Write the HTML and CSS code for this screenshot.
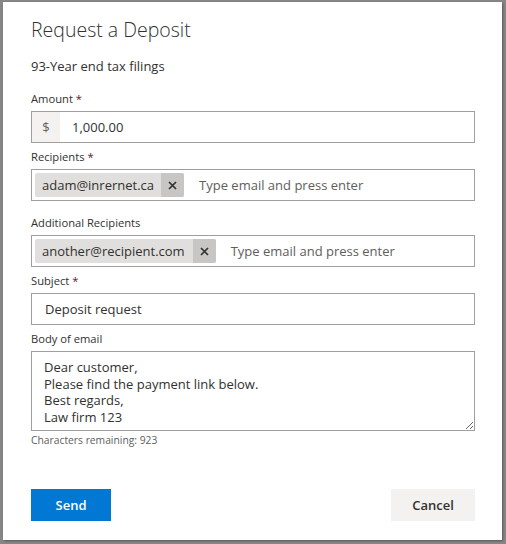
FILE: index.html
```html
<!DOCTYPE html>
<html>
<head>
<meta charset="utf-8">
<link rel="stylesheet" href="styles.css">
</head>
<body>
<div class="backdrop">
  <div class="dialog">
    <h1 class="title">Request a Deposit</h1>
    <div class="subtitle">93-Year end tax filings</div>

    <div class="field first">
      <div class="label">Amount <span class="req">*</span></div>
      <div class="box amount">
        <div class="prefix">$</div>
        <div class="value">1,000.00</div>
      </div>
    </div>

    <div class="field recipients">
      <div class="label">Recipients <span class="req">*</span></div>
      <div class="box tags">
        <div class="chip"><span class="chip-text">adam@inrernet.ca</span><span class="chip-x"><svg width="9" height="9" viewBox="0 0 9 9"><path d="M1 1L8 8M8 1L1 8" stroke="#323130" stroke-width="1.7" fill="none"/></svg></span></div>
        <div class="placeholder">Type email and press enter</div>
      </div>
    </div>

    <div class="field">
      <div class="label">Additional Recipients</div>
      <div class="box tags">
        <div class="chip"><span class="chip-text wide">another@recipient.com</span><span class="chip-x"><svg width="9" height="9" viewBox="0 0 9 9"><path d="M1 1L8 8M8 1L1 8" stroke="#323130" stroke-width="1.7" fill="none"/></svg></span></div>
        <div class="placeholder">Type email and press enter</div>
      </div>
    </div>

    <div class="field">
      <div class="label">Subject <span class="req">*</span></div>
      <div class="box text">Deposit request</div>
    </div>

    <div class="field">
      <div class="label">Body of email</div>
      <textarea class="body-text">Dear customer,
Please find the payment link below.
Best regards,
Law firm 123</textarea>
      <div class="hint">Characters remaining: 923</div>
    </div>

    <div class="actions">
      <div class="btn primary">Send</div>
      <div class="btn secondary">Cancel</div>
    </div>
  </div>
</div>
</body>
</html>
```

FILE: styles.css
```css
html, body {
  margin: 0;
  padding: 0;
}
body {
  width: 506px;
  height: 544px;
  background: #868686;
  font-family: "Open Sans", "Noto Sans", sans-serif;
  color: #323130;
  overflow: hidden;
}
.backdrop {
  padding: 2px 4px 4px 3px;
}
.dialog {
  box-sizing: border-box;
  width: 499px;
  height: 538px;
  background: #ffffff;
  padding: 14px 27px 0 28px;
  display: flex;
  flex-direction: column;
  box-shadow: 1px 1px 2px rgba(0,0,0,0.35);
}
.title {
  margin: 0;
  font-size: 19.5px;
  font-weight: 300;
  line-height: 28px;
  color: #323130;
}
.subtitle {
  margin-top: 12px;
  font-size: 13px;
  line-height: 20px;
}
.field {
  margin-top: 4px;
  display: flex;
  flex-direction: column;
}
.field.first {
  margin-top: 13px;
}
.label {
  font-size: 11.2px;
  line-height: 20px;
  margin-bottom: 2px;
}
.req {
  color: #5a2326;
}
.box {
  box-sizing: border-box;
  height: 32px;
  border: 1px solid #a19f9d;
  display: flex;
  align-items: center;
  font-size: 13px;
}
.amount {
  align-items: stretch;
}
.prefix {
  width: 28px;
  background: #f3f2f1;
  display: flex;
  align-items: center;
  justify-content: center;
  color: #605e5c;
}
.value {
  display: flex;
  align-items: center;
  padding-left: 12px;
}
.recipients {
  margin-bottom: 8px;
}
.tags {
  padding-left: 3px;
}
.chip {
  height: 24px;
  display: flex;
  align-items: stretch;
  background: #e1dfdd;
  border-radius: 2px;
  overflow: hidden;
}
.chip-text {
  display: flex;
  align-items: center;
  padding: 0 7px 0 7px;
}
.chip-text.wide {
  padding-right: 8px;
}
.chip-x {
  width: 23px;
  display: flex;
  align-items: center;
  justify-content: center;
  background: #c8c6c4;
}
.placeholder {
  margin-left: 15px;
  color: #605e5c;
}
.text {
  padding-left: 13px;
}
.body-text {
  box-sizing: border-box;
  height: 80px;
  width: 100%;
  margin: 0;
  border: 1px solid #a19f9d;
  padding: 7px 12px;
  font-family: "Open Sans", "Noto Sans", sans-serif;
  font-size: 13px;
  line-height: 16.7px;
  color: #323130;
  resize: vertical;
  outline: none;
  overflow: hidden;
}
.hint {
  font-size: 10.3px;
  line-height: 16px;
  color: #605e5c;
  margin-top: 1px;
}
.actions {
  margin-top: auto;
  margin-bottom: 19px;
  display: flex;
  justify-content: space-between;
}
.btn {
  box-sizing: border-box;
  height: 32px;
  display: flex;
  align-items: center;
  justify-content: center;
  font-size: 13px;
  font-weight: 600;
}
.primary {
  width: 80px;
  background: #0078d4;
  color: #ffffff;
}
.secondary {
  width: 84px;
  background: #f3f2f1;
  color: #323130;
}
```
